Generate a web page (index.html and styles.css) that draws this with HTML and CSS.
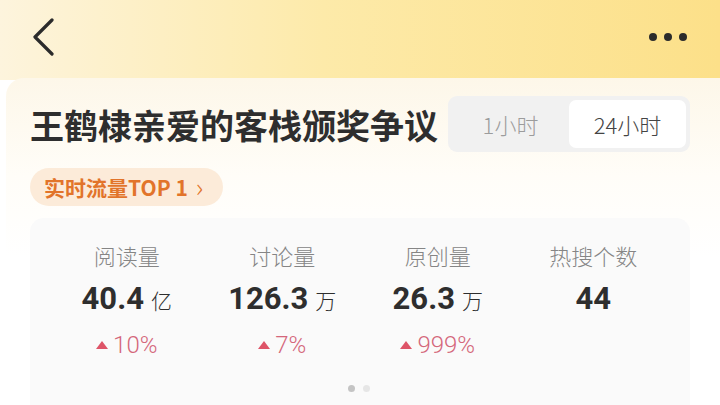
FILE: index.html
```html
<!DOCTYPE html>
<html lang="zh-CN">
<head>
    <meta charset="UTF-8">
    <meta name="viewport" content="width=device-width, initial-scale=1.0">
    <title>话题数据</title>
    <link rel="stylesheet" href="styles.css">
</head>
<body>

    <!-- 顶部导航 -->
    <div class="navbar">
        <button class="back-button">
            <svg width="26" height="38" viewBox="0 0 26 38">
                <path d="M22 2 L5 19 L22 36" fill="none" stroke="#2b2b2b" stroke-width="3.2" stroke-linecap="round" stroke-linejoin="round"/>
            </svg>
        </button>
        <div class="more-button">
            <span class="dot"></span><span class="dot"></span><span class="dot"></span>
        </div>
    </div>

    <!-- 话题卡片 -->
    <div class="panel">
        <div class="title-row">
            <h1 class="title">王鹤棣亲爱的客栈颁奖争议</h1>
            <div class="tabs">
                <span class="tab">1小时</span>
                <span class="tab active">24小时</span>
            </div>
        </div>

        <div class="rank-badge">实时流量TOP 1<span class="arrow">›</span></div>

        <!-- 数据统计 -->
        <div class="stats">
            <div class="stat-grid">
                <div class="stat">
                    <div class="label">阅读量</div>
                    <div class="value">40.4<span class="unit">亿</span></div>
                    <div class="change"><span class="tri"></span>10%</div>
                </div>
                <div class="stat">
                    <div class="label">讨论量</div>
                    <div class="value">126.3<span class="unit">万</span></div>
                    <div class="change"><span class="tri"></span>7%</div>
                </div>
                <div class="stat">
                    <div class="label">原创量</div>
                    <div class="value">26.3<span class="unit">万</span></div>
                    <div class="change"><span class="tri"></span>999%</div>
                </div>
                <div class="stat">
                    <div class="label">热搜个数</div>
                    <div class="value">44</div>
                    <div class="change"></div>
                </div>
            </div>
            <div class="pager">
                <span class="pager-dot current"></span>
                <span class="pager-dot"></span>
            </div>
        </div>
    </div>

</body>
</html>
```
FILE: styles.css
```css
body {
    margin: 0;
    width: 720px;
    height: 405px;
    overflow: hidden;
    background-color: #ffffff;
    font-family: "Noto Sans CJK SC", "Noto Sans", sans-serif;
}
/* 顶部导航 */
.navbar {
    height: 80px;
    display: flex;
    align-items: center;
    justify-content: space-between;
    padding: 0 30px 6px 30px;
    box-sizing: border-box;
    background: linear-gradient(90deg, #fdf4dd 0%, #fdeaa9 45%, #fce089 100%);
}
.back-button {
    border: none;
    background: none;
    padding: 0;
    display: flex;
}
.more-button {
    display: flex;
    gap: 7px;
    margin-right: 3px;
}
.dot {
    width: 8px;
    height: 8px;
    border-radius: 50%;
    background-color: #2b2b2b;
}
/* 话题卡片 */
.panel {
    margin-top: -2px;
    margin-left: 6px;
    padding: 18px 30px 0 24px;
    border-radius: 18px 0 0 0;
    background: linear-gradient(180deg, #fdf7e9 0%, #fffdf8 30%, #ffffff 55%);
    height: 309px;
}
.title-row {
    display: flex;
    align-items: center;
    justify-content: space-between;
}
.title {
    margin: 0;
    font-size: 34px;
    font-weight: bold;
    color: #2e2e2e;
}
.tabs {
    display: flex;
    padding: 4px;
    border-radius: 9px;
    background-color: #f1f1f1;
}
.tab {
    width: 117px;
    height: 48px;
    display: flex;
    align-items: center;
    justify-content: center;
    font-size: 22px;
    font-weight: 300;
    color: #9c9c9c;
    border-radius: 7px;
}
.tab.active {
    background-color: #ffffff;
    color: #444444;
}
/* 排名标签 */
.rank-badge {
    display: inline-flex;
    align-items: center;
    margin-top: 16px;
    padding: 0 20px 0 14px;
    height: 38px;
    border-radius: 19px;
    background-color: #fcebd9;
    color: #e2742a;
    font-size: 21px;
    font-weight: bold;
}
.rank-badge .arrow {
    margin-left: 8px;
    font-weight: 300;
    font-size: 26px;
    line-height: 1;
    margin-top: -3px;
}
/* 数据统计 */
.stats {
    margin-top: 12px;
    padding: 17px 19px 0 19px;
    border-radius: 14px 14px 0 0;
    background-color: #fafafa;
    height: 187px;
    box-sizing: border-box;
}
.stat-grid {
    display: grid;
    grid-template-columns: repeat(4, 1fr);
}
.stat {
    display: flex;
    flex-direction: column;
    align-items: center;
}
.label {
    font-size: 22px;
    font-weight: 300;
    color: #858585;
    line-height: 40px;
}
.value {
    font-family: "Roboto", "Noto Sans CJK SC", sans-serif;
    font-size: 31px;
    font-weight: bold;
    color: #2e2e2e;
    line-height: 48px;
}
.unit {
    margin-left: 7px;
    font-family: "Noto Sans CJK SC", sans-serif;
    font-size: 21px;
    font-weight: 300;
}
.change {
    height: 42px;
    display: flex;
    align-items: center;
    font-family: "Roboto", sans-serif;
    font-weight: 300;
    font-size: 24px;
    color: #d4677b;
}
.tri {
    width: 0;
    height: 0;
    margin-right: 5px;
    border-left: 6px solid transparent;
    border-right: 6px solid transparent;
    border-bottom: 8px solid #de5468;
}
.pager {
    display: flex;
    justify-content: center;
    gap: 8px;
    margin-top: 19px;
    margin-left: -2px;
}
.pager-dot {
    width: 7px;
    height: 7px;
    border-radius: 50%;
    background-color: #e6e6e6;
}
.pager-dot.current {
    background-color: #c4c4c4;
}
```
